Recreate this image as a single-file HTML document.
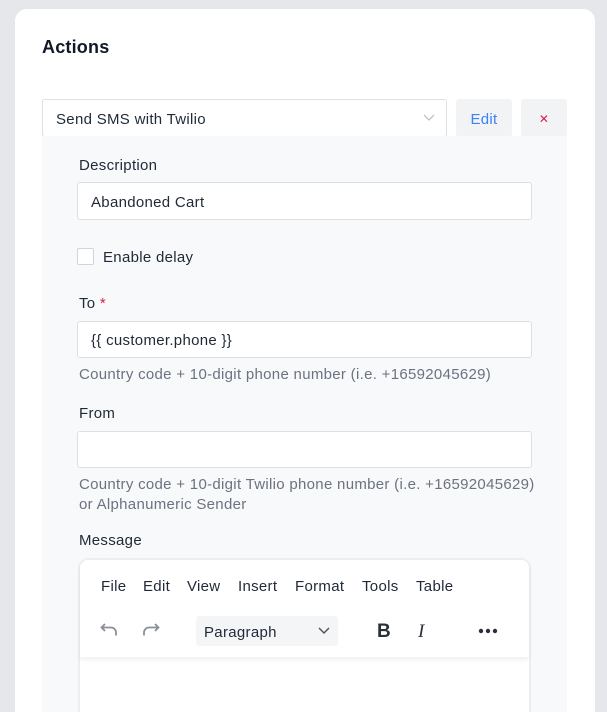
<!DOCTYPE html>
<html style="width:607px;height:712px;overflow:hidden"><head><style>
*{box-sizing:border-box;margin:0;padding:0}
body{width:607px;height:712px;background:#e5e7eb;font-family:"Liberation Sans",sans-serif;color:#1f2937;overflow:hidden;position:relative;font-size:15px;letter-spacing:0.3px}
.card{position:absolute;left:15px;top:9px;width:580px;height:703px;background:#fff;border-radius:12px 12px 0 0}
.abs{position:absolute}
h1{position:absolute;left:42px;top:37px;font-size:18px;font-weight:bold;color:#111827;letter-spacing:0.2px}
.panel{position:absolute;left:42px;top:136px;width:525px;height:576px;background:#f8f9fb}
.input{position:absolute;background:#fff;border:1px solid #dcdfe4;border-radius:3px;color:#1f2937;padding-left:13px;padding-top:2px;display:flex;align-items:center}
.lbl{position:absolute;color:#1f2937}
.help{position:absolute;color:#6b7280;line-height:20px}
.btn{position:absolute;background:#f2f3f5;border-radius:3px;display:flex;align-items:center;justify-content:center;padding-top:2px}
.menu span{position:absolute;top:578px;color:#1f2937}
</style></head><body>
<div class="card"></div>
<h1>Actions</h1>
<div class="input" style="left:42px;top:99px;width:405px;height:38px">Send SMS with Twilio
<svg class="abs" style="left:380px;top:14px" width="12" height="8" viewBox="0 0 12 8"><path d="M1 1l5 5 5-5" fill="none" stroke="#b8bcc3" stroke-width="1.2"/></svg></div>
<div class="btn" style="left:456px;top:99px;width:56px;height:38px;color:#3b82f6">Edit</div>
<div class="btn" style="left:521px;top:99px;width:46px;height:38px;color:#e11d48;font-size:12px">✕</div>
<div class="panel"></div>
<div class="lbl" style="left:79px;top:157px">Description</div>
<div class="input" style="left:77px;top:182px;width:455px;height:38px">Abandoned Cart</div>
<div class="abs" style="left:77px;top:248px;width:17px;height:17px;border:1px solid #d1d5db;background:#fff;border-radius:2px"></div>
<div class="lbl" style="left:103px;top:249px">Enable delay</div>
<div class="lbl" style="left:79px;top:295px">To <span style="color:#e11d48">*</span></div>
<div class="input" style="left:77px;top:321px;width:455px;height:37px">{{ customer.phone }}</div>
<div class="help" style="left:79px;top:365px">Country code + 10-digit phone number (i.e. +16592045629)</div>
<div class="lbl" style="left:79px;top:405px">From</div>
<div class="input" style="left:77px;top:431px;width:455px;height:37px"></div>
<div class="help" style="left:79px;top:475px">Country code + 10-digit Twilio phone number (i.e. +16592045629)<br>or Alphanumeric Sender</div>
<div class="lbl" style="left:79px;top:532px">Message</div>
<div class="abs" style="left:78px;top:558px;width:453px;height:170px;background:#fff;border:2px solid #eceef1;border-radius:10px"></div>
<div class="abs" style="left:80px;top:560px;width:449px;height:97px;background:#fff;box-shadow:0 3px 5px rgba(0,0,0,0.06);border-radius:8px 8px 0 0"></div>
<div class="menu"><span style="left:101px">File</span><span style="left:143px">Edit</span><span style="left:187px">View</span><span style="left:238px">Insert</span><span style="left:295px">Format</span><span style="left:362px">Tools</span><span style="left:416px">Table</span></div>
<svg class="abs" style="left:100px;top:620px" width="20" height="20" viewBox="0 0 20 20"><path d="M5 4L1.5 7.5 5 11M2 7.5h9a5 5 0 0 1 5 5v3" fill="none" stroke="#8a9099" stroke-width="1.8"/></svg>
<svg class="abs" style="left:140px;top:620px" width="20" height="20" viewBox="0 0 20 20"><path d="M15 4l3.5 3.5L15 11M18 7.5H9a5 5 0 0 0-5 5v3" fill="none" stroke="#8a9099" stroke-width="1.8"/></svg>
<div class="abs" style="left:196px;top:616px;width:142px;height:30px;background:#f4f5f6;border-radius:3px;padding:8px 0 0 8px">Paragraph
<svg class="abs" style="left:122px;top:11px" width="12" height="8" viewBox="0 0 12 8"><path d="M1 1l5 5 5-5" fill="none" stroke="#555" stroke-width="1.5"/></svg></div>
<div class="abs" style="left:377px;top:621px;font-size:19px;font-weight:bold;color:#2a2f38">B</div>
<div class="abs" style="left:418px;top:621px;font-size:19px;font-style:italic;font-family:'Liberation Serif',serif;color:#2a2f38">I</div>
<svg class="abs" style="left:478px;top:628px" width="20" height="6" viewBox="0 0 20 6"><circle cx="3" cy="3" r="2.2" fill="#2a2f38"/><circle cx="10" cy="3" r="2.2" fill="#2a2f38"/><circle cx="17" cy="3" r="2.2" fill="#2a2f38"/></svg>
</body></html>
